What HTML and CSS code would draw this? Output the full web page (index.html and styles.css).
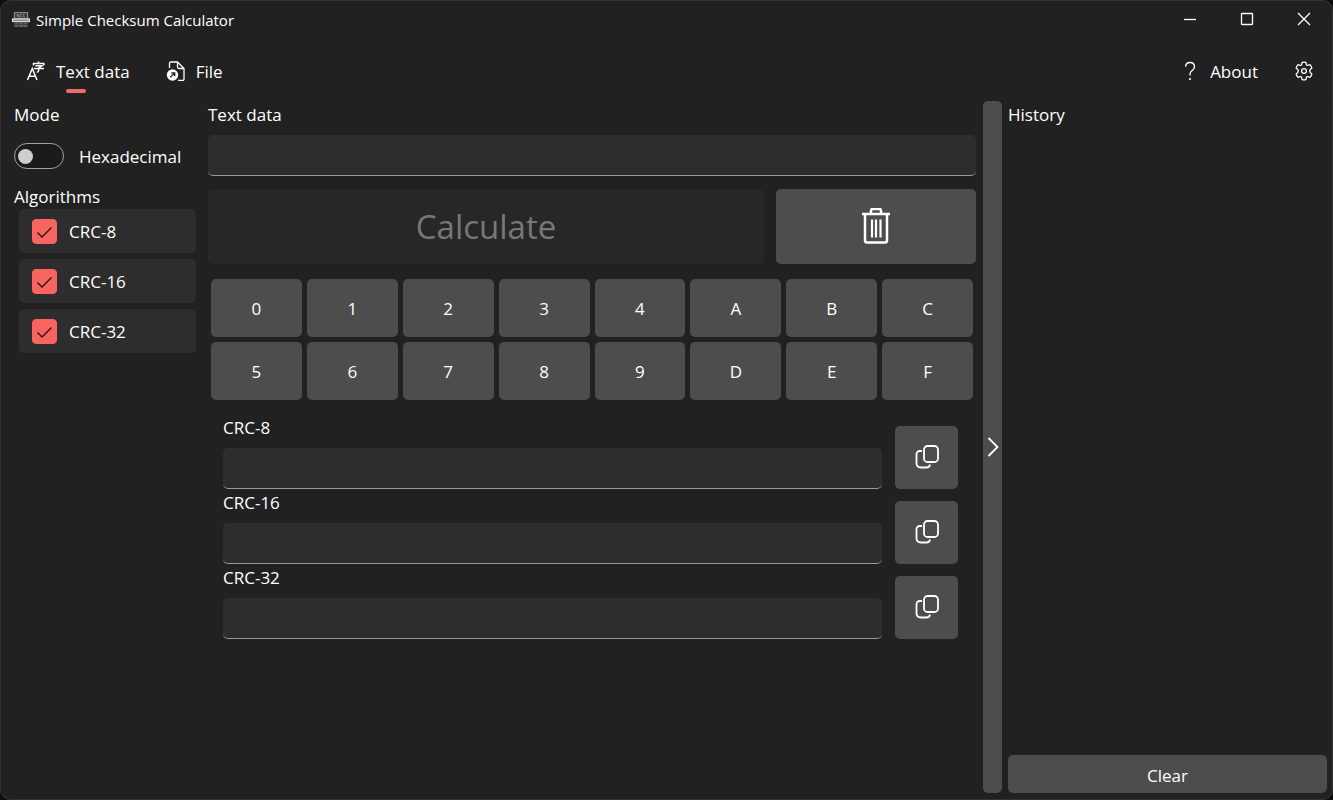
FILE: index.html
```html
<!DOCTYPE html>
<html lang="en">
<head>
    <meta charset="UTF-8">
    <meta name="viewport" content="width=device-width, initial-scale=1.0">
    <title>Simple Checksum Calculator</title>
    <link rel="stylesheet" href="styles.css">
</head>
<body>
    <div class="window">
        <!-- Title bar -->
        <header class="title-bar">
            <svg class="app-icon" width="18" height="16" viewBox="0 0 18 16" fill="none">
                <rect x="2.5" y="0.5" width="13" height="6.5" stroke="#8a8a8a" fill="#333"/>
                <path d="M7 2.5H5v1.2h2V5H5M10 2.5H8V5h2M13 2.5h-2V5h2" stroke="#999" stroke-width="0.7"/>
                <rect x="0.5" y="7" width="17" height="2.5" fill="#777" stroke="#ddd"/>
                <path d="M2.5 10.5h13v4.5h-13z" fill="#666"/>
                <path d="M2.5 12.5h13M6.5 10v5M11.5 10v5" stroke="#444"/>
            </svg>
            <h1 class="app-title">Simple Checksum Calculator</h1>
            <div class="window-buttons">
                <button class="window-button" aria-label="Minimize">
                    <svg width="14" height="14" viewBox="0 0 14 14"><path d="M1 7.5h12"/></svg>
                </button>
                <button class="window-button" aria-label="Maximize">
                    <svg width="14" height="14" viewBox="0 0 14 14"><rect x="1.5" y="1.5" width="11" height="11" rx="0.5"/></svg>
                </button>
                <button class="window-button" aria-label="Close">
                    <svg width="14" height="14" viewBox="0 0 14 14"><path d="M1 1l12 12M13 1L1 13"/></svg>
                </button>
            </div>
        </header>

        <!-- Page navigation -->
        <nav>
            <button class="nav-button active">
                <svg width="20" height="20" viewBox="0 0 20 20">
                    <path d="M1.5 19L6.3 7.5 11 19M3.200 15.2h6.2" stroke-width="1.5"/>
                    <path d="M12.5 0.5v1.8M7.500 4.500V2.500h10.300v2M9.500 4.800h6.300l-3.200 2.400v2.600q0 1.400-1.800 1.400M8 7.500h10" stroke-width="1.500"/>
                </svg>
                <span>Text data</span>
            </button>
            <button class="nav-button">
                <svg width="20" height="20" viewBox="0 0 20 20">
                    <path d="M3.500 7V2.500Q3.500 1 5 1h6.500L18 7.500V18q0 1.500-1.500 1.500H12M11.500 1v5q0 1.500 1.500 1.500h5"/>
                    <circle cx="6.500" cy="14" r="5.700" fill="#fff" stroke="none"/>
                    <path d="M4.300 16.200L8.600 11.900M5.200 11.800h3.500v3.500" stroke="#222"/>
                </svg>
                <span>File</span>
            </button>
            <button class="nav-button about-button">
                <svg width="20" height="20" viewBox="0 0 20 20">
                    <path d="M5.600 5.800Q5.600 1.500 10 1.500t4.500 4.200q0 2-2.300 3.900T10 13v1.500"/>
                    <circle cx="10" cy="18" r="1.100" fill="#fff" stroke="none"/>
                </svg>
                <span>About</span>
            </button>
            <button class="nav-button" aria-label="Settings">
                <svg width="20" height="20" viewBox="0 0 20 20">
                    <path d="M8.100 1.400Q10 0.900 11.900 1.400L12.400 3.700Q12.800 4.600 13.800 4.300L16 3.600Q17.400 5 17.900 6.900L16.300 8.500Q15 10 16.300 11.500L17.900 13.100Q17.400 15 16 16.400L13.800 15.700Q12.800 15.400 12.400 16.300L11.900 18.600Q10 19.100 8.100 18.600L7.600 16.300Q7.200 15.400 6.200 15.700L4 16.400Q2.600 15 2.100 13.100L3.700 11.500Q5 10 3.700 8.500L2.100 6.900Q2.600 5 4 3.600L6.200 4.300Q7.200 4.600 7.600 3.700z" stroke-linejoin="round"/>
                    <circle cx="10" cy="10" r="2.400"/>
                </svg>
            </button>
        </nav>

        <main>
            <!-- Mode and algorithm selection -->
            <aside class="options">
                <h2>Mode</h2>
                <label class="mode-switch">
                    <input type="checkbox" class="switch" role="switch">
                    <span class="option-text">Hexadecimal</span>
                </label>
                <h2>Algorithms</h2>
                <div class="algorithms">
                    <label class="algorithm">
                        <span class="check-box">
                            <input type="checkbox" checked>
                            <svg width="25" height="25" viewBox="0 0 25 25"><path d="M5.500 13.500l4.500 4.500L19.500 8.500"/></svg>
                        </span>
                        <span class="option-text">CRC-8</span>
                    </label>
                    <label class="algorithm">
                        <span class="check-box">
                            <input type="checkbox" checked>
                            <svg width="25" height="25" viewBox="0 0 25 25"><path d="M5.500 13.500l4.500 4.500L19.500 8.500"/></svg>
                        </span>
                        <span class="option-text">CRC-16</span>
                    </label>
                    <label class="algorithm">
                        <span class="check-box">
                            <input type="checkbox" checked>
                            <svg width="25" height="25" viewBox="0 0 25 25"><path d="M5.500 13.500l4.500 4.500L19.500 8.500"/></svg>
                        </span>
                        <span class="option-text">CRC-32</span>
                    </label>
                </div>
            </aside>

            <!-- Calculator -->
            <section class="calculator">
                <label for="text-data">Text data</label>
                <input type="text" id="text-data" class="text-box">
                <div class="actions">
                    <button class="calculate-button" disabled>Calculate</button>
                    <button class="delete-button" aria-label="Delete">
                        <svg width="30" height="38" viewBox="0 0 30 38">
                            <path d="M1 6h28M10 5V2.500Q10 1 11.500 1h7Q20 1 20 2.500V5M4 6v26.500Q4 34.500 6 34.500h18q2 0 2-2V6" stroke-width="2.500"/>
                            <path d="M11 11.500v18M15 11.500v18M19.500 11.500v18" stroke-width="2.200"/>
                        </svg>
                    </button>
                </div>
                <div class="keypad">
                    <button>0</button>
                    <button>1</button>
                    <button>2</button>
                    <button>3</button>
                    <button>4</button>
                    <button>A</button>
                    <button>B</button>
                    <button>C</button>
                    <button>5</button>
                    <button>6</button>
                    <button>7</button>
                    <button>8</button>
                    <button>9</button>
                    <button>D</button>
                    <button>E</button>
                    <button>F</button>
                </div>
                <div class="results">
                    <div class="result">
                        <div class="result-field">
                            <label for="crc8">CRC-8</label>
                            <input type="text" id="crc8" class="text-box" readonly>
                        </div>
                        <button class="copy-button" aria-label="Copy CRC-8">
                            <svg width="24" height="26" viewBox="0 0 24 26"><rect x="9" y="1" width="14" height="16" rx="3.500"/><path d="M7 6H5Q1.500 6 1.500 9.500V18q0 4.500 4.500 4.500h5.500q3 0 3.500-3"/></svg>
                        </button>
                    </div>
                    <div class="result">
                        <div class="result-field">
                            <label for="crc16">CRC-16</label>
                            <input type="text" id="crc16" class="text-box" readonly>
                        </div>
                        <button class="copy-button" aria-label="Copy CRC-16">
                            <svg width="24" height="26" viewBox="0 0 24 26"><rect x="9" y="1" width="14" height="16" rx="3.500"/><path d="M7 6H5Q1.500 6 1.500 9.500V18q0 4.500 4.500 4.500h5.500q3 0 3.500-3"/></svg>
                        </button>
                    </div>
                    <div class="result">
                        <div class="result-field">
                            <label for="crc32">CRC-32</label>
                            <input type="text" id="crc32" class="text-box" readonly>
                        </div>
                        <button class="copy-button" aria-label="Copy CRC-32">
                            <svg width="24" height="26" viewBox="0 0 24 26"><rect x="9" y="1" width="14" height="16" rx="3.500"/><path d="M7 6H5Q1.500 6 1.500 9.500V18q0 4.500 4.500 4.500h5.500q3 0 3.500-3"/></svg>
                        </button>
                    </div>
                </div>
            </section>

            <button class="history-toggle" aria-label="Toggle history">
                <svg width="12" height="20" viewBox="0 0 12 20"><path d="M1.500 1l9 9-9 9"/></svg>
            </button>

            <section class="history">
                <h2>History</h2>
                <button class="clear-button">Clear</button>
            </section>
        </main>
    </div>
</body>
</html>
```
FILE: styles.css
```css
/* Basic styling for the entire page */
* {
    box-sizing: border-box;
}

body {
    margin: 0;
    background-color: #0c0c0c;
    color: white;
    font-family: "Open Sans", "Noto Sans", sans-serif;
    font-size: 17px;
    line-height: 24px;
}

button, input {
    font: inherit;
    color: inherit;
}

button {
    display: flex;
    align-items: center;
    justify-content: center;
    padding: 0;
    border: none;
    border-radius: 5px;
    background-color: #4d4d4d;
}

button:hover {
    background-color: #555;
}

svg {
    display: block;
    flex: none;
    fill: none;
    stroke: white;
    stroke-width: 1.3;
}

h2 {
    margin: 0;
    font-size: 17px;
    font-weight: 400;
}

.window {
    display: flex;
    flex-direction: column;
    min-height: 100vh;
    border: 1px solid #333;
    border-radius: 10px;
    background-color: #212121;
}

/* Title bar */
.title-bar {
    display: flex;
    align-items: center;
    height: 38px;
    padding-left: 11px;
}

.app-icon {
    stroke: none;
}

.app-title {
    margin: 0 0 0 6px;
    font-size: 15px;
    font-weight: 400;
}

.window-buttons {
    display: flex;
    align-self: flex-start;
    margin-left: auto;
}

.window-button {
    width: 57px;
    height: 36px;
    background-color: transparent;
}

/* Navigation */
nav {
    display: flex;
    gap: 6px;
    height: 62px;
    padding: 8px 3px 0 10px;
    border-bottom: 1px solid #1d1d1d;
}

.nav-button {
    position: relative;
    gap: 10px;
    height: 48px;
    padding: 0 15px;
    background-color: transparent;
}

.nav-button span {
    padding-top: 2px;
}

/* Marker under the selected page */
.nav-button.active::after {
    content: "";
    position: absolute;
    bottom: 2px;
    left: calc(50% - 12px);
    width: 20px;
    height: 4px;
    border-radius: 2px;
    background-color: #ed6a6a;
}

.about-button {
    margin-left: auto;
}

/* Main content */
main {
    display: grid;
    grid-template-columns: 182px 1fr 19px 325px;
    flex: 1;
    padding: 0 5px 6px 13px;
}

/* Mode and algorithms */
.options {
    padding-top: 2px;
}

.mode-switch {
    display: flex;
    align-items: center;
    gap: 15px;
    height: 58px;
}

.option-text {
    padding-top: 2px;
}

.switch {
    appearance: none;
    display: flex;
    align-items: center;
    width: 50px;
    height: 26px;
    margin: 0;
    padding: 0 3px;
    border: 1px solid #a0a0a0;
    border-radius: 13px;
    background-color: #1b1b1b;
}

.switch::before {
    content: "";
    width: 15px;
    height: 15px;
    border-radius: 50%;
    background-color: #cecece;
}

.switch:checked {
    justify-content: flex-end;
}

.algorithms {
    display: grid;
    gap: 6px;
    padding-left: 5px;
}

.algorithm {
    display: flex;
    align-items: center;
    gap: 12px;
    height: 44px;
    padding-left: 13px;
    border-radius: 5px;
    background-color: #2d2d2d;
}

.check-box {
    display: grid;
}

.check-box input,
.check-box svg {
    grid-area: 1 / 1;
}

.check-box input {
    appearance: none;
    width: 25px;
    height: 25px;
    margin: 0;
    border: 1px solid #a0a0a0;
    border-radius: 4px;
}

.check-box input:checked {
    border-color: #f8645f;
    background-color: #f8645f;
}

.check-box svg {
    stroke: #2a1010;
    pointer-events: none;
    visibility: hidden;
}

.check-box input:checked + svg {
    visibility: visible;
}

/* Calculator */
.calculator {
    display: flex;
    flex-direction: column;
    padding: 2px 7px 0 12px;
}

.text-box {
    width: 100%;
    height: 41px;
    margin-top: 8px;
    padding: 0 12px;
    border: none;
    border-bottom: 1px solid #9a9a9a;
    border-radius: 5px;
    background-color: #2d2d2d;
}

.actions {
    display: flex;
    gap: 12px;
    margin-top: 13px;
}

.calculate-button,
.delete-button {
    height: 75px;
}

.calculate-button {
    flex: 1;
    font-size: 33px;
}

.calculate-button:disabled {
    background-color: #272727;
    color: #777;
}

.delete-button {
    width: 200px;
}

.keypad {
    display: grid;
    grid-template-columns: repeat(8, 1fr);
    gap: 5px;
    padding: 15px 3px 16px;
}

.keypad button {
    height: 58px;
    padding-top: 2px;
}

.results {
    display: grid;
    gap: 2px;
    padding: 0 18px 0 15px;
}

.result {
    display: flex;
    align-items: flex-end;
    gap: 13px;
}

.result-field {
    flex: 1;
}

.copy-button {
    width: 63px;
    height: 63px;
}

.copy-button svg {
    stroke-width: 1.8;
}

/* History */
.history-toggle svg {
    stroke-width: 1.8;
}

.history {
    display: flex;
    flex-direction: column;
    padding: 2px 0 0 6px;
}

.clear-button {
    height: 38px;
    margin-top: auto;
    padding-top: 4px;
}
```
